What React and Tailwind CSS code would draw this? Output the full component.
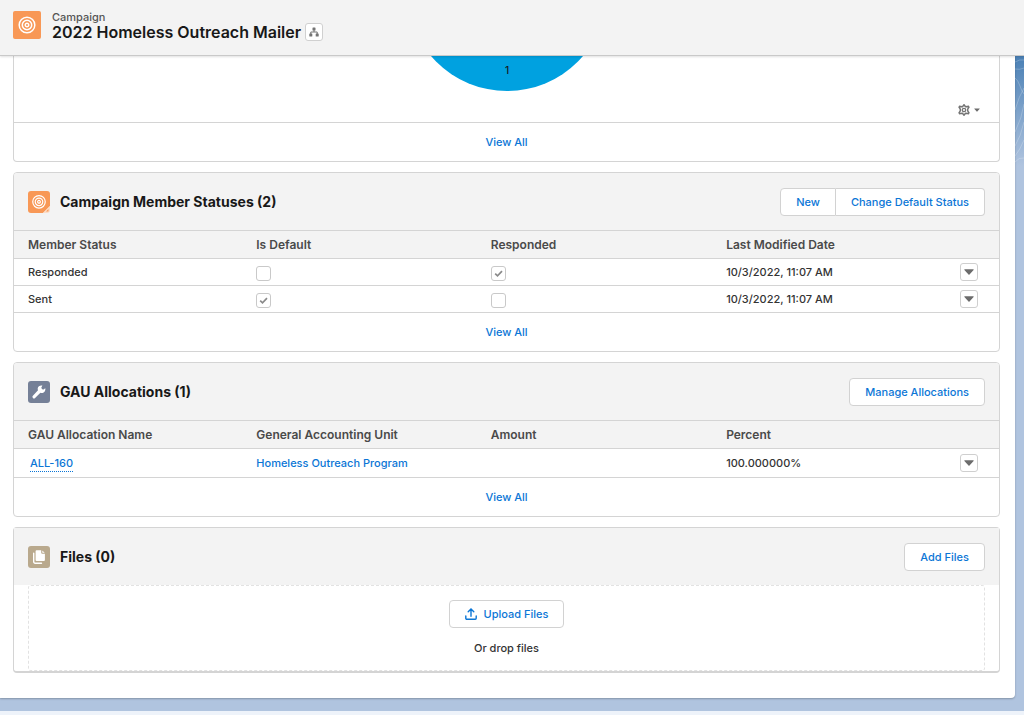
import React from "react";

const BUTTON =
  "h-7 border border-[#d2d2d2] bg-white px-[15px] font-medium text-[#0b76d6] flex items-center justify-center";
const TH = "h-7 text-left text-xs font-semibold text-[#4a4a4a]";

function Target({ x = 12, y = 12, s = 1 }) {
  return (
    <g transform={`translate(${x} ${y}) scale(${s})`} fill="none" stroke="#fff" strokeWidth="1.3">
      <circle r="6.8" />
      <circle r="4.1" />
      <circle r="1.5" />
    </g>
  );
}

function CampaignIcon() {
  return (
    <svg className="size-7 shrink-0" viewBox="0 0 28 28" aria-hidden="true">
      <rect width="28" height="28" rx="2" fill="#f89856" />
      <Target x={14} y={14} s={1.15} />
    </svg>
  );
}

function MemberStatusIcon() {
  return (
    <svg className="size-[22px] shrink-0" viewBox="0 0 22 22" aria-hidden="true">
      <path d="M3 0h16a3 3 0 0 1 3 3v12l-7 7H3a3 3 0 0 1-3-3V3a3 3 0 0 1 3-3z" fill="#f89856" />
      <Target x={11} y={10.8} s={0.92} />
      <path d="M22 15v4a3 3 0 0 1-3 3h-4z" fill="#fcdcc6" />
      <path d="M20.500 18v2.500h-2.500z" fill="#f89856" />
    </svg>
  );
}

function WrenchIcon() {
  return (
    <svg className="size-[22px] shrink-0" viewBox="0 0 22 22" aria-hidden="true">
      <rect width="22" height="22" rx="3" fill="#758097" />
      <path
        d="M17.300 7.200 15 8.700l-1.800-1.600 1.200-2.500c-1.900-.6-4.500.5-4.700 3 0 .7.100 1.200.3 1.700L4.900 14.800a1.500 1.500 0 0 0 2.200 2.200l5.300-5.200c2.800 1 5.500-1.500 4.900-4.600z"
        fill="#fff"
      />
    </svg>
  );
}

function FilesIcon() {
  return (
    <svg className="size-[22px] shrink-0" viewBox="0 0 22 22" aria-hidden="true">
      <rect width="22" height="22" rx="3" fill="#b9a98d" />
      <path d="M5.700 7.200v8.600a1.400 1.400 0 0 0 1.400 1.400H13.500" fill="none" stroke="#fff" strokeWidth="1.400" strokeLinecap="round" />
      <path d="M8.600 4.200h4.600v2.600a1 1 0 0 0 1 1h2.700v6.200a1 1 0 0 1-1 1H8.600a1 1 0 0 1-1-1V5.200a1 1 0 0 1 1-1z" fill="#fff" />
      <path d="M14.300 4.400v2.300h2.400z" fill="#fff" />
    </svg>
  );
}

function Down({ className }) {
  return (
    <svg className={className} viewBox="0 0 10 6" aria-hidden="true">
      <path d="M.8.300h8.400c.5 0 .7.500.4.800L5.500 5.600a.7.700 0 0 1-1 0L.4 1.100C.1.800.3.300.8.300z" fill="#6c6c6c" />
    </svg>
  );
}

function RowMenu({ label }) {
  return (
    <button
      type="button"
      aria-label={`Show actions for ${label}`}
      className="flex size-[18px] items-center justify-center rounded-[3px] border border-[#cfcfcf] bg-white"
    >
      <Down className="h-[6px] w-[10px]" />
    </button>
  );
}

function Check({ checked, label }) {
  return (
    <span className="relative mt-[3px] flex size-[15px]">
      <input
        type="checkbox"
        aria-label={label}
        checked={checked}
        readOnly
        className="size-[15px] appearance-none rounded-[3px] border border-[#c9c9c9] bg-white"
      />
      {checked && (
        <svg className="pointer-events-none absolute inset-0" viewBox="0 0 15 15" aria-hidden="true">
          <path d="M4.200 7.700l2.300 2.200 4.500-4.700" fill="none" stroke="#8a8a8a" strokeWidth="1.700" />
        </svg>
      )}
    </span>
  );
}

function CardHeader({ icon, title, children }) {
  return (
    <header className="flex h-[57px] items-center bg-[#f3f3f3] px-3.5">
      {icon}
      <h2 className="ml-2.5 flex-1 text-sm font-bold text-[#181818]">{title}</h2>
      {children}
    </header>
  );
}

function Card({ children }) {
  return (
    <section className="mt-2.5 overflow-hidden rounded-[4px] border border-[#d4d4d4] bg-white">{children}</section>
  );
}

function ViewAll() {
  return (
    <div className="flex h-[38px] items-center justify-center">
      <a href="#all" className="text-[#0b76d6]">View All</a>
    </div>
  );
}

function DataTable({ columns, children }) {
  return (
    <table className="w-full table-fixed border-collapse">
      <colgroup>
        <col className="w-[24.6%]" />
        <col className="w-[23.8%]" />
        <col className="w-[23.9%]" />
        <col />
        <col className="w-[39px]" />
      </colgroup>
      <thead>
        <tr className="border-y border-[#d4d4d4] bg-[#f3f3f3]">
          {columns.map((c, i) => (
            <th key={c} scope="col" className={i === 0 ? `${TH} pl-3.5` : TH}>{c}</th>
          ))}
          <th scope="col" className={TH} aria-label="Actions" />
        </tr>
      </thead>
      <tbody>{children}</tbody>
    </table>
  );
}

const statuses = [
  { name: "Responded", isDefault: false, responded: true },
  { name: "Sent", isDefault: true, responded: false },
];

export default function App() {
  return (
    <div className="flex min-h-screen flex-col bg-[#b0c4df] font-[Inter,'Liberation_Sans',sans-serif] text-[11px] leading-4 font-medium text-[#333]">
      <header className="relative z-10 flex h-14 items-start border-b border-[#c9c9c9] bg-[#f3f3f3] px-[13px] pt-[11px] shadow-[0_1px_2px_rgba(0,0,0,0.12)]">
        <CampaignIcon />
        <div className="ml-[11px]">
          <p className="leading-3 text-[#555]">Campaign</p>
          <div className="flex items-center gap-1">
            <h1 className="text-base leading-[18px] font-semibold text-[#181818]">2022 Homeless Outreach Mailer</h1>
            <button
              type="button"
              aria-label="View campaign hierarchy"
              className="flex size-[18px] items-center justify-center rounded-[3px] border border-[#d0d0d0] bg-white"
            >
              <svg className="size-[10px]" viewBox="0 0 10 10" fill="#747474" aria-hidden="true">
                <rect x="3.500" y="0.500" width="3" height="3" rx="0.600" />
                <rect x="0.300" y="6.500" width="3" height="3" rx="0.600" />
                <rect x="6.700" y="6.500" width="3" height="3" rx="0.600" />
                <path d="M5 3v2M1.800 7V5h6.400v2" fill="none" stroke="#747474" strokeWidth="1" />
              </svg>
            </button>
          </div>
        </div>
      </header>

      <div className="flex bg-[linear-gradient(#4a80b5,#b0c4df_110px)]">
        <main className="min-w-0 flex-1 rounded-br-[4px] bg-white pr-[15px] pb-[25px] pl-[13px] shadow-[0_1px_2px_rgba(0,0,0,0.25)]">
          <section className="rounded-b-[4px] border border-t-0 border-[#d4d4d4]">
            <div className="relative flex h-[67px] justify-center border-b border-[#d4d4d4]">
              <svg className="h-9 w-[200px]" viewBox="0 0 200 36" role="img" aria-label="Campaign members chart">
                <circle cx="100" cy="-65" r="100" fill="#00a1e0" />
                <text x="100" y="18" textAnchor="middle" fontSize="10" fill="#181818">1</text>
              </svg>
              <button type="button" aria-label="Chart settings" className="absolute right-[19px] bottom-[6px] flex items-center gap-1">
                <svg className="size-3" viewBox="0 0 12 12" aria-hidden="true">
                  <path
                    d="M6 .8 7.500 2.700l2.900-.3.500.9-1.200 1.900v1.600l1.200 1.900-.5.900-2.900-.3L6 11.200 4.500 9.300l-2.900.3-.5-.9 1.200-1.900V5.200L1.100 3.300l.5-.9 2.900.3z"
                    fill="none"
                    stroke="#747474"
                    strokeWidth="1.500"
                  />
                  <circle cx="6" cy="6" r="1.700" fill="none" stroke="#747474" strokeWidth="1.300" />
                </svg>
                <Down className="h-1 w-1.5" />
              </button>
            </div>
            <ViewAll />
          </section>

          <Card>
            <CardHeader icon={<MemberStatusIcon />} title="Campaign Member Statuses (2)">
              <div className="flex">
                <button type="button" className={`${BUTTON} rounded-l-[4px]`}>New</button>
                <button type="button" className={`${BUTTON} rounded-r-[4px] border-l-0`}>Change Default Status</button>
              </div>
            </CardHeader>
            <DataTable columns={["Member Status", "Is Default", "Responded", "Last Modified Date"]}>
              {statuses.map((s) => (
                <tr key={s.name} className="h-[27px] border-b border-[#d4d4d4]">
                  <td className="pl-3.5">{s.name}</td>
                  <td><Check checked={s.isDefault} label={`${s.name} is default`} /></td>
                  <td><Check checked={s.responded} label={`${s.name} counts as responded`} /></td>
                  <td>10/3/2022, 11:07 AM</td>
                  <td><RowMenu label={s.name} /></td>
                </tr>
              ))}
            </DataTable>
            <ViewAll />
          </Card>

          <Card>
            <CardHeader icon={<WrenchIcon />} title="GAU Allocations (1)">
              <button type="button" className={`${BUTTON} rounded-[4px]`}>Manage Allocations</button>
            </CardHeader>
            <DataTable columns={["GAU Allocation Name", "General Accounting Unit", "Amount", "Percent"]}>
              <tr className="h-[29px] border-b border-[#d4d4d4]">
                <td className="pl-4">
                  <a href="#all-160" className="inline-block border-b border-dotted border-[#0b76d6] text-[#0b76d6]">ALL-160</a>
                </td>
                <td><a href="#program" className="text-[#0b76d6]">Homeless Outreach Program</a></td>
                <td></td>
                <td>100.000000%</td>
                <td><RowMenu label="ALL-160" /></td>
              </tr>
            </DataTable>
            <ViewAll />
          </Card>

          <section className="mt-2.5 rounded-[4px] border border-b-2 border-[#d4d4d4] bg-white">
            <CardHeader icon={<FilesIcon />} title="Files (0)">
              <button type="button" className={`${BUTTON} rounded-[4px]`}>Add Files</button>
            </CardHeader>
            <div className="mx-3.5 flex h-[86px] flex-col items-center rounded-[3px] border border-dashed border-[#e2e2e2] pt-3.5">
              <button type="button" className={`${BUTTON} gap-[7px] rounded-[4px]`}>
                <svg className="size-3" viewBox="0 0 12 12" fill="none" stroke="#0b76d6" strokeWidth="1.400" strokeLinecap="round" aria-hidden="true">
                  <path d="M.8 8v2.200a1 1 0 0 0 1 1h8.400a1 1 0 0 0 1-1V8M6 8.200V1.200M3.200 3.800 6 1l2.800 2.800" />
                </svg>
                Upload Files
              </button>
              <p className="mt-3">Or drop files</p>
            </div>
          </section>
        </main>
        <aside className="w-[9px] shrink-0 overflow-hidden" aria-hidden="true">
          <svg className="h-[110px] w-[9px]" viewBox="0 0 9 110" fill="none" stroke="#fff" strokeOpacity="0.22">
            <path d="M0 6q5-3 9-2M0 13q5 1 9-1M0 22q3 2 5 8t4 8M9 32q-5 8-9 22M9 48q-2 14-9 28M9 66q-3 14-9 24M9 84q-4 10-9 16M0 106q4-5 9-4" />
          </svg>
        </aside>
      </div>
      <footer className="mt-auto h-1 bg-[#eef3fa]" />
    </div>
  );
}
